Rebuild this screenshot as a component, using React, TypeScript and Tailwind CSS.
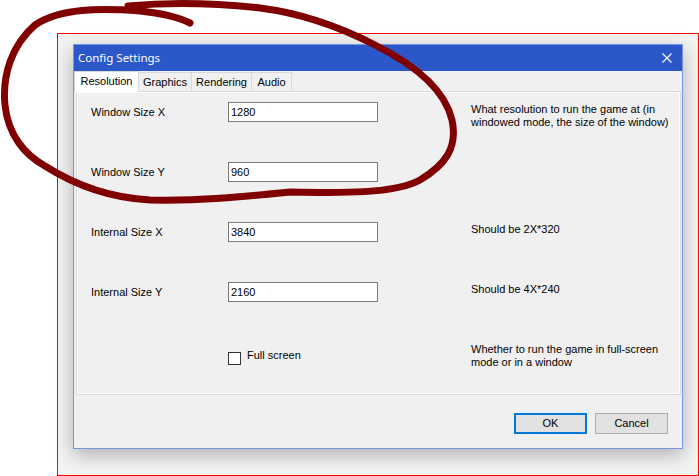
import { useState } from "react";

type Field = {
  label: string;
  value: string;
  help?: string[];
};

const FIELDS: Field[] = [
  {
    label: "Window Size X",
    value: "1280",
    help: ["What resolution to run the game at (in", "windowed mode, the size of the window)"],
  },
  { label: "Window Size Y", value: "960" },
  { label: "Internal Size X", value: "3840", help: ["Should be 2X*320"] },
  { label: "Internal Size Y", value: "2160", help: ["Should be 4X*240"] },
];

const TABS = [
  { name: "Resolution", w: "w-[53px]" },
  { name: "Graphics", w: "w-[53px]" },
  { name: "Rendering", w: "w-[60px]" },
  { name: "Audio", w: "w-[40px]" },
];

/** Hand-drawn marker loop scribbled over the window. */
function Scribble() {
  return (
    <svg
      className="pointer-events-none absolute inset-0"
      width="699"
      height="476"
      viewBox="0 0 699 476"
      fill="none"
      aria-hidden
    >
      <path
        d="M128 6 C170 2 215 3 260 8 C300 13 340 27 375 45 C415 65 445 90 452 120 C458 148 445 165 420 180 C395 194 340 193 290 192 C240 197 200 201 150 200 C110 198 75 185 45 166 C25 155 8 135 5 105 C2 75 12 45 35 25 C60 8 100 8 140 11 C160 13 178 17 190 23"
        stroke="#800000"
        strokeWidth="7"
        strokeLinecap="round"
        strokeLinejoin="round"
      />
    </svg>
  );
}

function TextBox({ value }: { value: string }) {
  return (
    <div className="flex h-[20px] w-[150px] shrink-0 items-center border border-[#7a7a7a] bg-white pl-[2px] text-[11px] text-black">
      {value}
    </div>
  );
}

function HelpText({ lines }: { lines?: string[] }) {
  if (!lines) return null;
  return (
    <div className="pt-[1px] text-[11px] leading-[13px] text-black">
      {lines.map((l) => (
        <div key={l} className="whitespace-nowrap">
          {l}
        </div>
      ))}
    </div>
  );
}

export default function App() {
  const [fullScreen, setFullScreen] = useState(false);

  return (
    <div className="relative h-[476px] w-[699px] overflow-hidden bg-white pl-[57px] pt-[33px] font-['Liberation_Sans',Arial,sans-serif]">
      {/* red selection frame around the captured window */}
      <div className="h-[443px] w-[642px] border border-[#ff0000] bg-[#f3f3f3] pl-[15px] pt-[10px]">
        {/* dialog */}
        <div className="flex h-[405px] w-[610px] flex-col border border-[#7596e0] bg-[#f0f0f0] shadow-[0_6px_18px_rgba(0,0,0,0.28)]">
          {/* title bar */}
          <div className="flex h-[26px] shrink-0 items-center justify-between bg-[#2b57c9] pl-[4px] pr-[10px]">
            <span className="font-['Noto_Sans',sans-serif] text-[11.5px] text-white">Config Settings</span>
            <svg width="10" height="10" viewBox="0 0 10 10" aria-hidden>
              <path d="M0.5 0.5 L9.5 9.5 M9.5 0.5 L0.5 9.5" stroke="#fff" strokeWidth="1.1" />
            </svg>
          </div>

          {/* tab strip */}
          <div className="relative z-10 flex h-[20px] items-start">
            <div className="-mb-[1px] flex h-[21px] w-[65px] items-center justify-center border-x border-t border-[#d9d9d9] bg-white pb-[2px] text-[11px] text-black">
              Resolution
            </div>
            {TABS.slice(1).map((t) => (
              <div
                key={t.name}
                className={`mt-[1px] flex h-[19px] ${t.w} items-center justify-center border-r border-t border-[#d9d9d9] bg-[#f0f0f0] text-[11px] text-black`}
              >
                {t.name}
              </div>
            ))}
          </div>

          {/* tab page */}
          <div className="ml-[2px] h-[304px] w-[605px] border border-[#d9d9d9] bg-white p-[1px]">
            <div className="flex h-full flex-col gap-[40px] bg-[#f0f0f0] pt-[9px]">
              {FIELDS.map((f) => (
                <div key={f.label} className="flex h-[20px] items-start">
                  <div className="flex h-[20px] w-[150px] shrink-0 items-center pl-[13px] pt-[1px] text-[11px] text-black">
                    {f.label}
                  </div>
                  <TextBox value={f.value} />
                  <div className="w-[93px] shrink-0" />
                  <HelpText lines={f.help} />
                </div>
              ))}

              <div className="flex h-[20px] items-start">
                <div className="w-[150px] shrink-0" />
                <label className="flex w-[243px] shrink-0 cursor-default items-start gap-[6px]">
                  <button
                    type="button"
                    onClick={() => setFullScreen((v) => !v)}
                    className="mt-[10px] flex h-[13px] w-[13px] items-center justify-center border border-[#333] bg-white"
                  >
                    {fullScreen && (
                      <svg width="9" height="9" viewBox="0 0 9 9" aria-hidden>
                        <path d="M1 4.5 L3.5 7 L8 1.5" stroke="#000" strokeWidth="1.3" fill="none" />
                      </svg>
                    )}
                  </button>
                  <span className="mt-[7px] text-[11px] leading-[13px] text-black">Full screen</span>
                </label>
                <HelpText lines={["Whether to run the game in full-screen", "mode or in a window"]} />
              </div>
            </div>
          </div>

          {/* buttons */}
          <div className="flex justify-end gap-[8px] pr-[14px] pt-[18px]">
            <button
              type="button"
              className="flex h-[21px] w-[73px] items-center justify-center border-2 border-[#0078d7] bg-[#e1e1e1] text-[11px] text-black"
            >
              OK
            </button>
            <button
              type="button"
              className="flex h-[21px] w-[73px] items-center justify-center border border-[#adadad] bg-[#e1e1e1] text-[11px] text-black"
            >
              Cancel
            </button>
          </div>
        </div>
      </div>

      <Scribble />
    </div>
  );
}
